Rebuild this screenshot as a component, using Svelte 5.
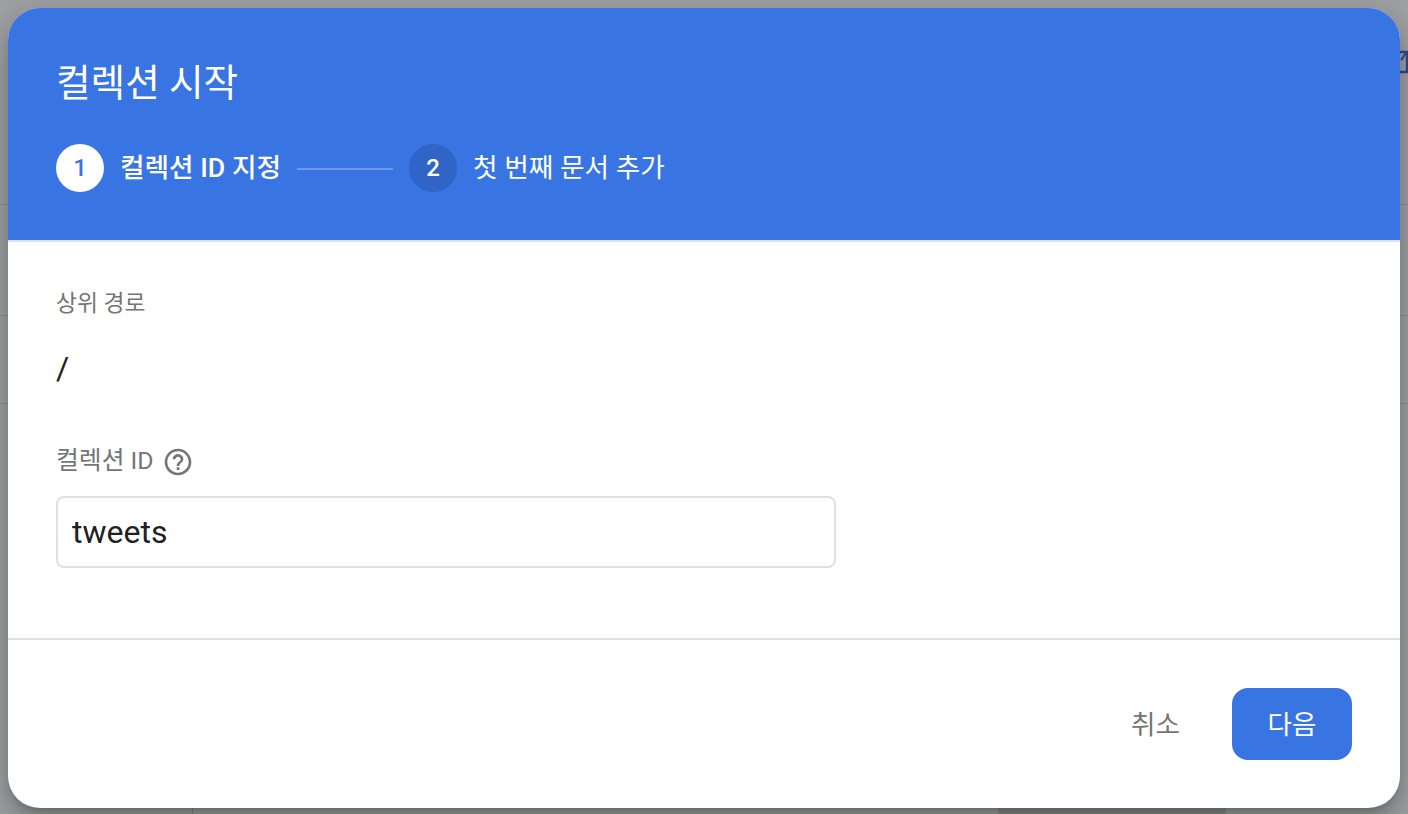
<script>
  let collectionId = 'tweets';
</script>

<div class="backdrop">
  <div class="page-lines">
    <svg class="edge-icon" viewBox="0 0 24 24" width="30" height="30" aria-hidden="true">
      <path d="M3 3h18v18H3v-2h16V5H3z M18 5h1.6l-3.4 6-1.6-1z" />
    </svg>
    <hr class="line line-a" />
    <hr class="line line-b" />
    <hr class="line line-c" />
    <div class="bottom-bar"></div>
    <div class="bottom-tick"></div>
  </div>

  <div class="dialog">
    <header class="head">
      <h1 class="title">컬렉션 시작</h1>
      <div class="stepper">
        <div class="step">
          <span class="badge badge-on">1</span>
          <span class="step-label step-label-on">컬렉션 ID 지정</span>
        </div>
        <div class="connector"></div>
        <div class="step">
          <span class="badge badge-off">2</span>
          <span class="step-label">첫 번째 문서 추가</span>
        </div>
      </div>
    </header>

    <section class="body">
      <div class="field-label">상위 경로</div>
      <div class="path">/</div>
      <div class="field-label id-label">
        컬렉션 ID
        <svg class="help" viewBox="0 0 24 24" width="32" height="32" aria-hidden="true">
          <path d="M11 18h2v-2h-2v2zm1-16C6.48 2 2 6.48 2 12s4.48 10 10 10 10-4.48 10-10S17.52 2 12 2zm0 18c-4.41 0-8-3.59-8-8s3.59-8 8-8 8 3.59 8 8-3.59 8-8 8zm0-14c-2.21 0-4 1.79-4 4h2c0-1.1.9-2 2-2s2 .9 2 2c0 2-3 1.75-3 5h2c0-2.25 3-2.5 3-5 0-2.21-1.79-4-4-4z" />
        </svg>
      </div>
      <input class="id-input" type="text" bind:value={collectionId} />
    </section>

    <footer class="foot">
      <button class="btn btn-text">취소</button>
      <button class="btn btn-primary">다음</button>
    </footer>
  </div>
</div>

<style>
  :global(body) {
    margin: 0;
    overflow: hidden;
  }

  .backdrop {
    position: relative;
    width: 1408px;
    height: 814px;
    overflow: hidden;
    background: #a0a1a5;
    font-family: Roboto, "Noto Sans CJK KR", sans-serif;
    display: flex;
    align-items: flex-start;
    justify-content: center;
    padding-top: 8px;
    box-sizing: border-box;
  }

  .page-lines {
    position: absolute;
    inset: 0;
  }

  .edge-icon {
    position: absolute;
    left: 1382px;
    top: 47px;
    fill: #2b4c96;
  }

  .line {
    position: absolute;
    left: 0;
    right: 0;
    margin: 0;
    border: 0;
    height: 1px;
    background: #8f9093;
  }

  .line-a { top: 204px; }
  .line-b { top: 315px; }
  .line-c { top: 403px; }

  .bottom-bar {
    position: absolute;
    left: 998px;
    top: 808px;
    width: 228px;
    height: 6px;
    background: rgba(0, 0, 0, 0.12);
  }

  .bottom-tick {
    position: absolute;
    left: 192px;
    top: 808px;
    width: 1px;
    height: 6px;
    background: rgba(0, 0, 0, 0.15);
  }

  .dialog {
    position: relative;
    width: 1392px;
    height: 800px;
    display: flex;
    flex-direction: column;
    background: #fff;
    border-radius: 32px;
    overflow: hidden;
    box-shadow: 0 8px 10px -5px rgba(0, 0, 0, 0.2), 0 16px 24px 2px rgba(0, 0, 0, 0.14), 0 6px 30px 5px rgba(0, 0, 0, 0.12);
  }

  .head {
    box-sizing: border-box;
    height: 234px;
    padding: 48px 48px 0;
    background: #3874e2;
    border-bottom: 2px solid #e0e0e0;
    color: #fff;
  }

  .title {
    margin: 3px 0 0;
    font-size: 37.6px;
    line-height: 48px;
    font-weight: 400;
  }

  .stepper {
    display: flex;
    align-items: center;
    margin-top: 37px;
  }

  .step {
    display: flex;
    align-items: center;
    gap: 16px;
  }

  .badge {
    width: 48px;
    height: 48px;
    border-radius: 50%;
    display: flex;
    align-items: center;
    justify-content: center;
    font-size: 24px;
    font-weight: 500;
  }

  .badge-on {
    background: #fff;
    color: #3874e2;
  }

  .badge-off {
    background: #3064c6;
    color: #fff;
  }

  .step-label {
    font-size: 26.7px;
    line-height: 32px;
    font-weight: 400;
  }

  .step-label-on {
    font-weight: 500;
  }

  .connector {
    width: 96px;
    height: 2px;
    margin: 2px 16px 0;
    background: #6f9aea;
  }

  .body {
    box-sizing: border-box;
    height: 398px;
    padding: 48px 48px 0;
    border-bottom: 2px solid #e0e0e0;
  }

  .field-label {
    font-size: 22.8px;
    line-height: 28px;
    color: #757575;
  }

  .path {
    margin-top: 32px;
    font-size: 32px;
    line-height: 36px;
    color: #212121;
  }

  .id-label {
    margin-top: 58px;
    font-size: 24.8px;
    display: flex;
    align-items: center;
    gap: 8px;
  }

  .help {
    fill: #757575;
    margin-top: 2px;
  }

  .id-input {
    display: block;
    box-sizing: border-box;
    width: 780px;
    height: 72px;
    margin-top: 18px;
    padding: 0 14px;
    border: 2px solid #e0e0e0;
    border-radius: 8px;
    outline: none;
    font-family: inherit;
    font-size: 32px;
    color: #212121;
  }

  .foot {
    flex: 1;
    display: flex;
    align-items: flex-start;
    justify-content: flex-end;
    gap: 24px;
    padding: 48px 48px 0;
  }

  .btn {
    height: 72px;
    border: 0;
    border-radius: 16px;
    padding-bottom: 5px;
    font-family: inherit;
    font-size: 26.6px;
    font-weight: 400;
    cursor: pointer;
  }

  .btn-text {
    padding-left: 28px;
    padding-right: 28px;
    background: transparent;
    color: #757575;
  }

  .btn-primary {
    width: 120px;
    padding-left: 0;
    padding-right: 0;
    background: #3874e2;
    color: #fff;
  }
</style>
